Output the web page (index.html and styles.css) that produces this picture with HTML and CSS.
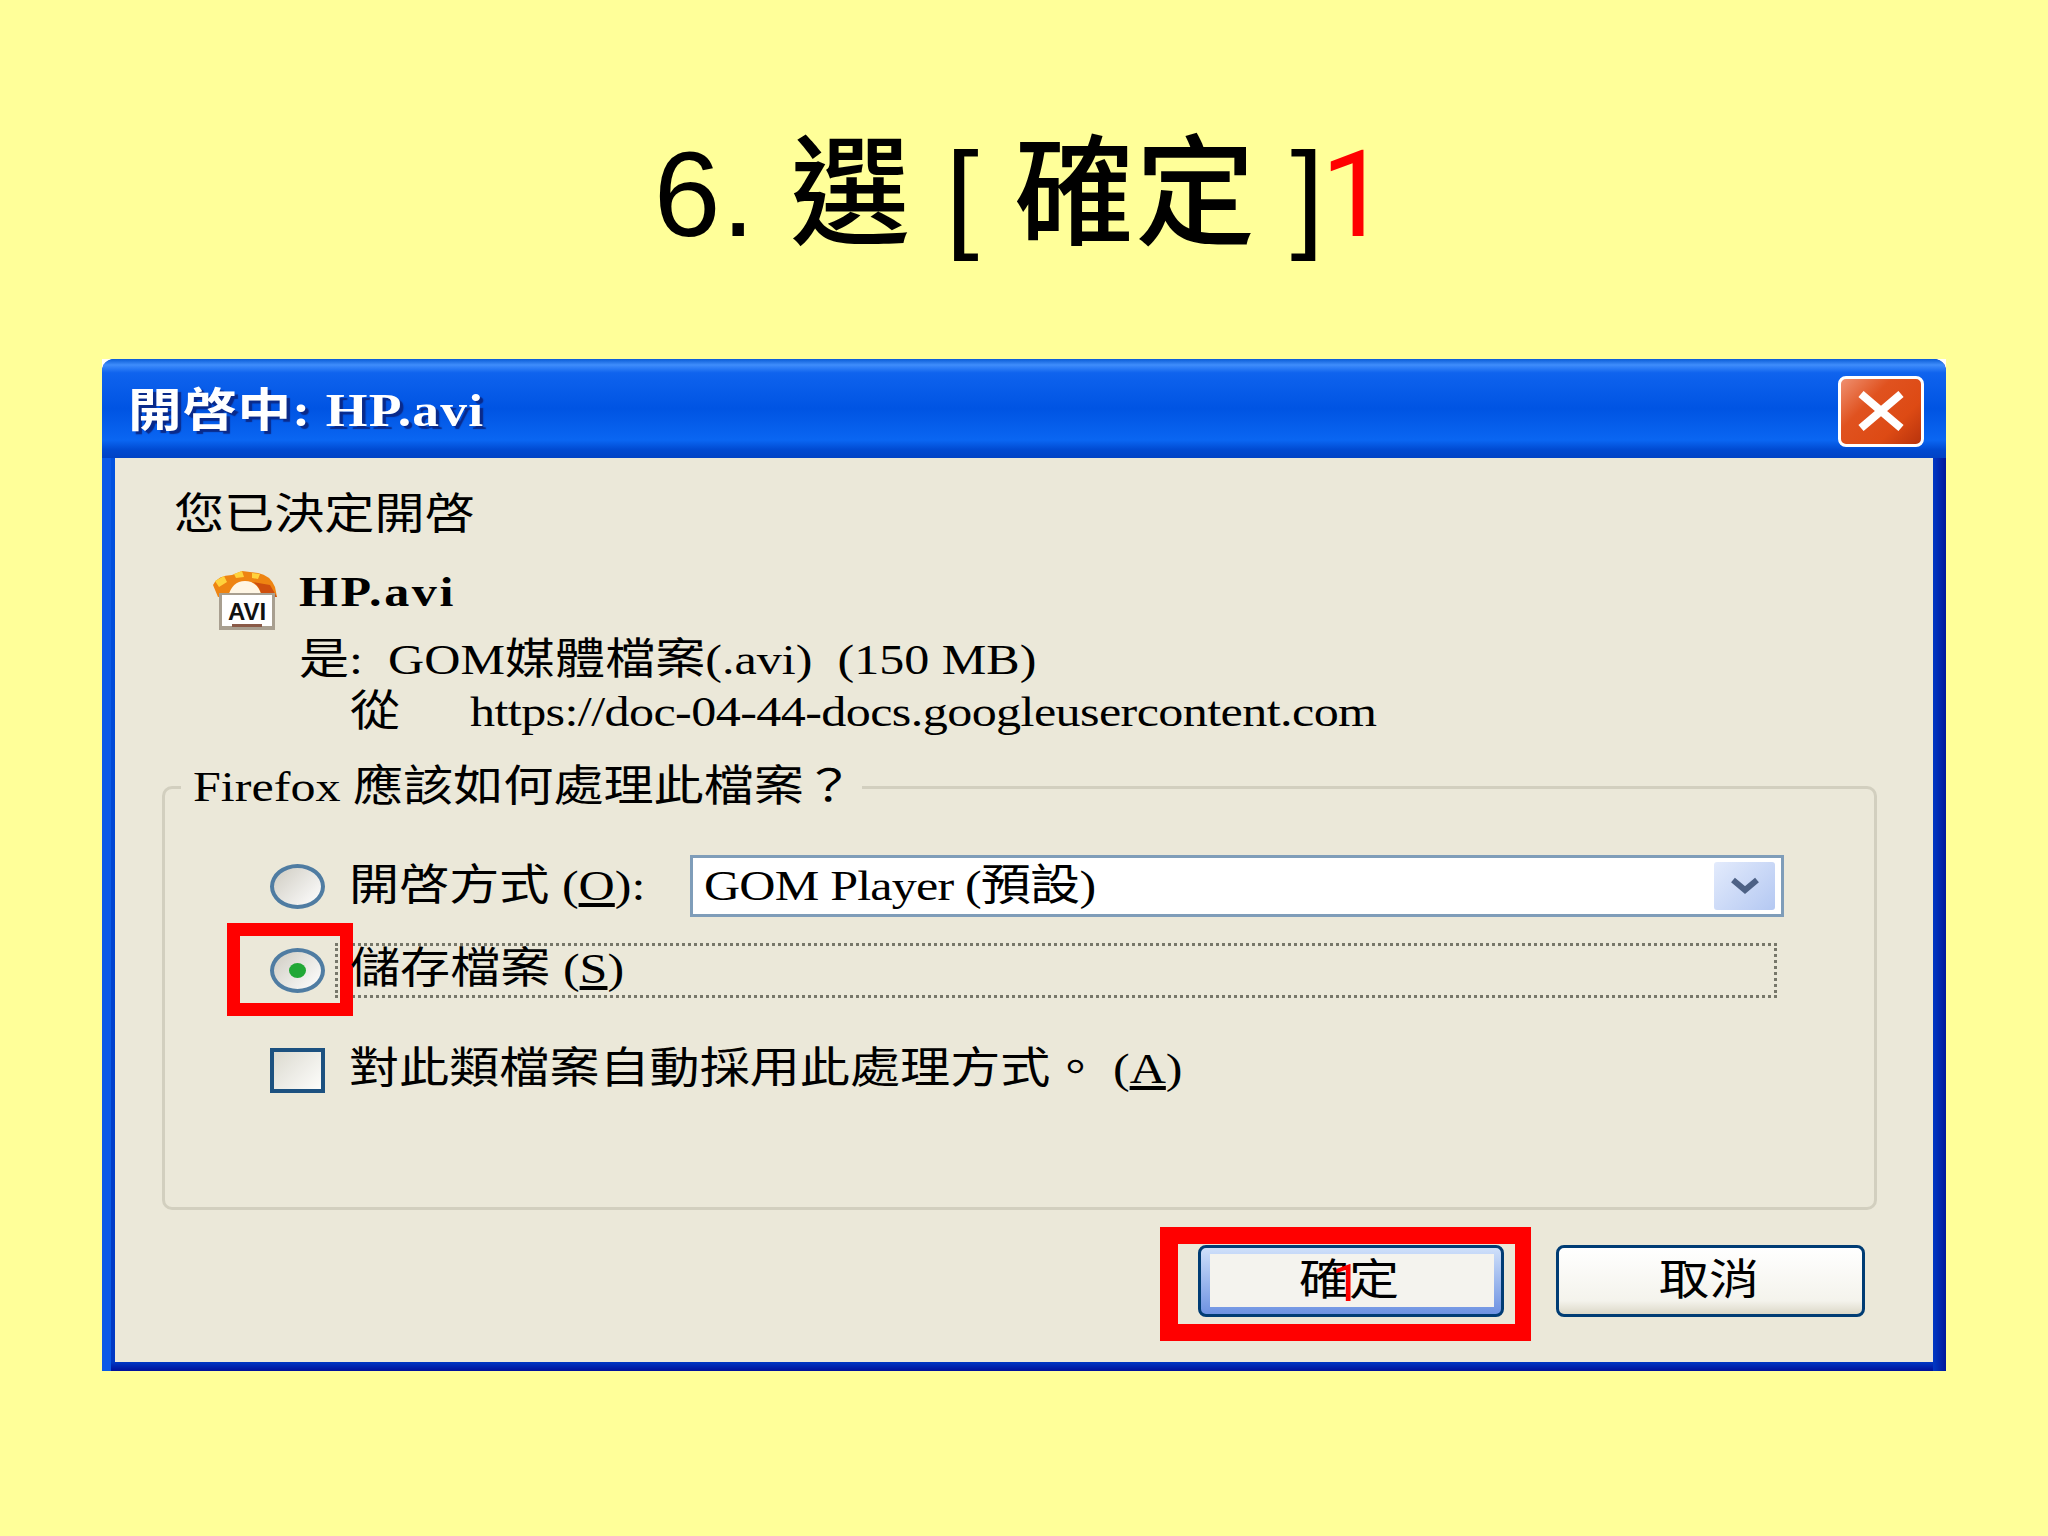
FILE: index.html
```html
<!DOCTYPE html>
<html lang="zh-Hant">
<head>
    <meta charset="UTF-8">
    <title>6. 選 [ 確定 ]</title>
    <link rel="stylesheet" href="styles.css">
</head>
<body>
    <h1 class="slide-title">6. 選 [ 確定 ]<span class="red">1</span></h1>

    <div class="window">
        <div class="frame">
            <div class="titlebar">
                <span class="wide caption">開啓中: HP.avi</span>
                <button class="close-btn" aria-label="close">
                    <svg viewBox="0 0 48 40" width="48" height="40">
                        <path d="M4 3 L44 37 M44 3 L4 37" stroke="#fff" stroke-width="8" fill="none"/>
                    </svg>
                </button>
            </div>

            <div class="content">
                <div class="line intro"><span class="wide">您已決定開啓</span></div>

                <div class="file-info">
                    <svg class="file-icon" viewBox="0 0 66 60" width="66" height="60">
                        <path d="M1 14 Q6 4 20 4 L30 0 L46 2 Q58 4 63 16 L65 26 L6 26 Z" fill="#ee8412"/>
                        <path d="M3 10 L12 5 L15 11 L7 16 Z M22 3 L30 0 L32 6 L24 7 Z M40 2 L48 3 L46 8 L40 7 Z" fill="#ffd23c"/>
                        <path d="M16 26 Q20 10 33 10 Q46 10 50 26 Z" fill="#fff6e4"/>
                        <path d="M50 26 Q48 14 40 11 L58 14 L65 26 Z" fill="#cf4f0e"/>
                        <rect x="7" y="22" width="56" height="37" fill="#a89f90"/>
                        <rect x="10" y="24" width="50" height="31" fill="#fff"/>
                        <rect x="20" y="53" width="30" height="3" fill="#8a5a48"/>
                        <text class="avi-label" x="35" y="49" text-anchor="middle">AVI</text>
                    </svg>
                    <div class="file-text">
                        <div class="line name"><span class="wide">HP.avi</span></div>
                        <div class="line type"><span class="wide">是: &nbsp;GOM媒體檔案(.avi) &nbsp;(150 MB)</span></div>
                        <div class="line from">
                            <span class="wide from-label">從</span>
                            <span class="wide url">https://doc-04-44-docs.googleusercontent.com</span>
                        </div>
                    </div>
                </div>

                <fieldset class="group">
                    <legend><span class="wide">Firefox 應該如何處理此檔案？</span></legend>

                    <div class="option open-row">
                        <span class="radio"></span>
                        <span class="wide label">開啓方式 (<u>O</u>):</span>
                        <div class="combo">
                            <span class="wide combo-text">GOM Player (預設)</span>
                            <span class="combo-arrow">
                                <svg viewBox="0 0 32 20" width="32" height="20">
                                    <path d="M4 4 L16 14 L28 4" stroke="#4d6185" stroke-width="6" fill="none"/>
                                </svg>
                            </span>
                        </div>
                    </div>

                    <div class="option save-row">
                        <span class="radio checked"><span class="mark mark-radio"></span></span>
                        <div class="focus-box"><span class="wide label">儲存檔案 (<u>S</u>)</span></div>
                    </div>

                    <div class="option auto-row">
                        <span class="checkbox"></span>
                        <span class="wide label">對此類檔案自動採用此處理方式。 (<u>A</u>)</span>
                    </div>
                </fieldset>

                <div class="buttons">
                    <button class="btn btn-default">
                        <span class="wide-center">確定</span>
                        <span class="btn-note">1</span>
                        <span class="mark mark-btn"></span>
                    </button>
                    <button class="btn"><span class="wide-center">取消</span></button>
                </div>
            </div>
        </div>
    </div>
</body>
</html>
```
FILE: styles.css
```css
:root {
    --page-bg: #ffff99;
    --face: #ebe8d9;
    --xp-blue: #0054e3;
    --navy: #003c74;
    --red: #ff0000;
}

* {
    margin: 0;
    padding: 0;
    box-sizing: border-box;
}

body {
    width: 2048px;
    height: 1536px;
    overflow: hidden;
    background: var(--page-bg);
    color: #000;
    font-family: "Liberation Serif", "Noto Sans CJK TC", serif;
}

/* slide heading */
.slide-title {
    height: 359px;
    padding: 120px 6px 0 0;
    text-align: center;
    font-family: "Liberation Sans", "Noto Sans CJK TC", sans-serif;
    font-size: 120px;
    font-weight: 500;
    letter-spacing: 1px;
    line-height: 148px;
}

.red {
    margin-left: -4px;
    color: var(--red);
    font-family: Roboto, sans-serif;
    font-weight: 400;
    letter-spacing: 0;
}

/* dialog window */
.window {
    width: 1844px;
    height: 1012px;
    margin-left: 102px;
    background: #fff;
}

.frame {
    height: 100%;
    display: flex;
    flex-direction: column;
    border-radius: 12px 12px 0 0;
    overflow: hidden;
    padding: 0 13px 9px;
    background:
        linear-gradient(90deg, #0a5ae6 0, #0a5ae6 9px, transparent 9px, transparent calc(100% - 13px), #0038c4 calc(100% - 13px), #00189c 100%),
        linear-gradient(#0054e3 0, #0038c4 calc(100% - 9px), #00109a 100%);
}

.titlebar {
    height: 99px;
    margin: 0 -13px;
    padding: 5px 22px 0 26px;
    display: flex;
    align-items: center;
    justify-content: space-between;
    background: linear-gradient(#0a5cd6 0, #3f8dfb 6%, #0f63ee 14%, #0054e3 50%, #0a66f2 82%, #0049d0 92%, #0042c4 100%);
}

.wide {
    display: inline-block;
    transform: scaleX(1.165);
    transform-origin: left center;
    white-space: pre;
}

.caption {
    color: #fff;
    font-size: 46px;
    font-weight: 700;
    letter-spacing: 1px;
    line-height: 60px;
    text-shadow: 3px 3px 1px #0a2a8a;
}

.close-btn {
    width: 86px;
    height: 71px;
    display: flex;
    align-items: center;
    justify-content: center;
    border: 3px solid #fff;
    border-radius: 8px;
    background: linear-gradient(135deg, #ef9070 0, #e0521f 35%, #dd4a14 70%, #b8330c 100%);
}

.content {
    flex: 1;
    padding: 32px 56px 0 47px;
    background: var(--face);
}

.line {
    height: 50px;
    font-size: 43px;
    line-height: 50px;
    white-space: nowrap;
}

.intro {
    margin-left: 12px;
}

.file-info {
    display: flex;
    margin: 27px 0 0 50px;
}

.file-icon {
    flex: none;
    margin: 4px 21px 0 0;
}

.avi-label {
    font-family: "Liberation Sans", sans-serif;
    font-size: 24px;
    font-weight: 700;
    fill: #111;
}

.name {
    font-weight: 700;
    letter-spacing: 2.2px;
}

.type {
    margin-top: 18px;
}

.from {
    margin-top: 2px;
}

.from-label {
    width: 109px;
    margin-left: 51px;
}

.url {
    letter-spacing: -0.5px;
}

/* group box */
.group {
    margin-top: 25px;
    padding: 43px 60px 114px 105px;
    border: 3px solid #d2cfbf;
    border-radius: 10px;
}

.group legend {
    width: 681px;
    height: 50px;
    margin-left: -89px;
    padding-left: 12px;
    font-size: 43px;
    line-height: 50px;
}

.option {
    display: flex;
    align-items: center;
    font-size: 43px;
    line-height: 50px;
}

.open-row {
    height: 62px;
}

.save-row {
    height: 55px;
    margin-top: 26px;
}

.auto-row {
    height: 45px;
    margin-top: 50px;
}

.label {
    margin-left: 24px;
}

.save-row .label,
.auto-row .label {
    padding-bottom: 4px;
}

.radio {
    position: relative;
    flex: none;
    width: 55px;
    height: 45px;
    border: 4px solid #4f7ca2;
    border-radius: 50%;
    background: linear-gradient(135deg, #cfccc2, #ffffff);
}

.radio.checked::after {
    content: "";
    position: absolute;
    left: 15px;
    top: 11px;
    width: 17px;
    height: 15px;
    border-radius: 50%;
    background: #21a836;
}

.checkbox {
    flex: none;
    width: 55px;
    height: 45px;
    border: 4px solid #1c5180;
    background: linear-gradient(135deg, #dcdad0, #fdfdfb);
}

.combo {
    width: 1094px;
    height: 62px;
    margin-left: 87px;
    padding: 0 6px 0 11px;
    display: flex;
    align-items: center;
    justify-content: space-between;
    border: 3px solid #7f9db9;
    background: #fff;
}

.combo-text {
    letter-spacing: -0.7px;
}

.combo-arrow {
    width: 61px;
    height: 48px;
    display: flex;
    align-items: center;
    justify-content: center;
    border-radius: 3px;
    background: linear-gradient(135deg, #e3ebfc, #b4c8f2);
}

.focus-box {
    width: 1442px;
    height: 55px;
    margin-left: 10px;
    display: flex;
    align-items: center;
    border: 3px dotted #77776a;
}

.focus-box .label {
    margin-left: 12px;
}

/* bottom buttons */
.buttons {
    margin: 35px 12px 0 0;
    display: flex;
    justify-content: flex-end;
    gap: 52px;
}

.btn {
    position: relative;
    width: 309px;
    height: 72px;
    padding-right: 4px;
    border: 3px solid var(--navy);
    border-radius: 8px;
    background: linear-gradient(#ffffff, #f4f3ec 80%, #dcd8c8);
    color: #000;
    font-family: inherit;
    font-size: 43px;
    line-height: 50px;
}

.btn-default {
    width: 306px;
    background:
        linear-gradient(#f4f3ee, #f4f3ee) 9px 6px / calc(100% - 16px) calc(100% - 13px) no-repeat,
        linear-gradient(#cfe0fa, #6d92e2);
}

.wide-center {
    display: inline-block;
    transform: scaleX(1.165);
}

.btn-note {
    position: absolute;
    left: 131px;
    top: 6px;
    color: var(--red);
    font-family: Roboto, sans-serif;
    font-size: 52px;
    line-height: 60px;
}

/* red highlight boxes drawn over the screenshot */
.mark {
    position: absolute;
    border: solid var(--red);
}

.mark-radio {
    left: -47px;
    top: -29px;
    width: 126px;
    height: 93px;
    border-width: 13px;
}

.mark-btn {
    left: -41px;
    top: -21px;
    width: 371px;
    height: 114px;
    border-width: 17px 16px 17px 18px;
}
```
